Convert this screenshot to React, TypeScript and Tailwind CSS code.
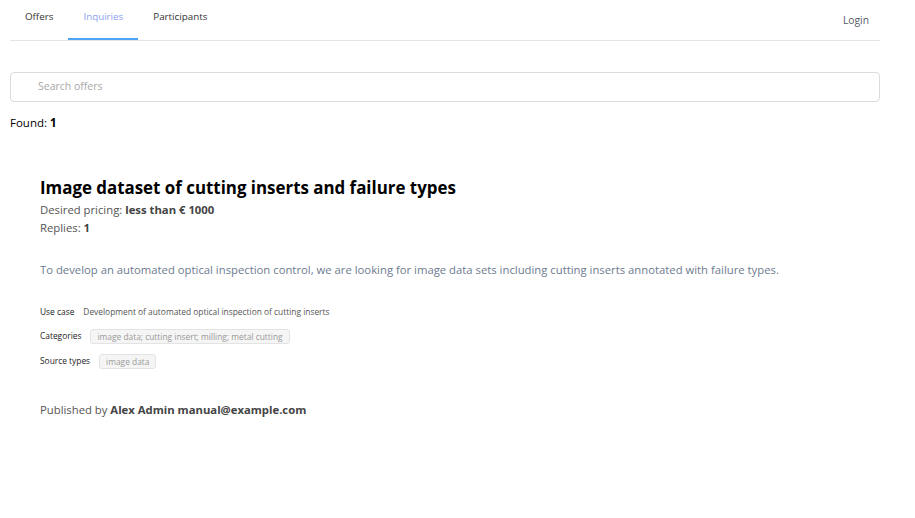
import React from "react";

const TABS = ["Offers", "Inquiries", "Participants"];

function Badge({ children }: { children: React.ReactNode }) {
  return (
    <span className="inline-flex items-center h-[15px] px-[6px] rounded-[3px] border border-[#e3e3e3] bg-[#f5f5f5] text-[8.4px] text-[#9a9a9a] leading-none">
      {children}
    </span>
  );
}

export default function App() {
  return (
    <div className="min-h-[518px] bg-white text-[#333] font-['Open_Sans',sans-serif]">
      {/* top nav */}
      <nav className="mx-[10px] w-[870px] h-[41px] flex items-stretch justify-between border-b border-[#e4e4e8]">
        <div className="flex items-stretch">
          {TABS.map((t) => (
            <div
              key={t}
              className={
                "px-[15px] flex items-start pt-[10px] text-[9.8px] " +
                (t === "Inquiries"
                  ? "text-[#8aa0f2] border-b-2 border-[#4da3f7]"
                  : "text-[#333] border-b-2 border-transparent")
              }
            >
              {t}
            </div>
          ))}
        </div>
        <div className="flex items-start pt-[13px] pr-[11px] text-[10.3px] text-[#555a66]">Login</div>
      </nav>

      {/* search */}
      <div className="mx-[10px] mt-[31px] w-[870px] h-[30px] rounded-[4px] border border-[#dcdce0] flex items-center pl-[27px] text-[10.5px] text-[#a8a8a8]">
        Search offers
      </div>

      <p className="mx-[10px] mt-[12px] text-[11.5px] text-black">
        Found: <span className="font-bold">1</span>
      </p>

      {/* inquiry card */}
      <div className="px-[40px] pt-[45px]">
        <h2 className="text-[16.9px] font-bold text-black leading-[24px]">
          Image dataset of cutting inserts and failure types
        </h2>
        <p className="mt-[1px] text-[11.3px] text-[#555] leading-[18px]">
          Desired pricing: <span className="font-bold text-[#444]">less than € 1000</span>
        </p>
        <p className="text-[11.3px] text-[#555] leading-[18px]">
          Replies: <span className="font-bold text-[#444]">1</span>
        </p>

        <p className="mt-[24px] text-[11.3px] text-[#6d7b90] leading-[18px]">
          To develop an automated optical inspection control, we are looking for image data sets including cutting inserts annotated with failure types.
        </p>

        <div className="mt-[26px] flex flex-col gap-[10px] text-[8.4px]">
          <div className="flex items-center gap-[9px] h-[14px]">
            <span className="text-[#222]">Use case</span>
            <span className="text-[#555]">Development of automated optical inspection of cutting inserts</span>
          </div>
          <div className="flex items-center gap-[9px] h-[15px]">
            <span className="text-[#222]">Categories</span>
            <Badge>image data; cutting insert; milling; metal cutting</Badge>
          </div>
          <div className="flex items-center gap-[9px] h-[15px]">
            <span className="text-[#222]">Source types</span>
            <Badge>image data</Badge>
          </div>
        </div>

        <p className="mt-[32px] text-[11.3px] text-[#555] leading-[18px]">
          Published by <span className="font-bold text-[#444]">Alex Admin manual@example.com</span>
        </p>
      </div>
    </div>
  );
}
